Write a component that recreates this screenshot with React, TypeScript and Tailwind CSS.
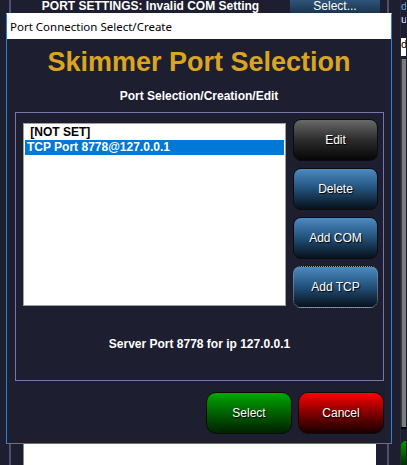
const SideButton = ({ label, kind, focused }: { label: string; kind: "gray" | "blue"; focused?: boolean }) => {
  const tone =
    kind === "gray"
      ? "from-[#6a6a6a] via-[#2c2c2c] to-[#070707]"
      : "from-[#4c8bc3] via-[#22507a] to-[#07121c]";
  return (
    <div
      className={`h-[42px] w-[85px] rounded-[8px] border bg-linear-to-b ${tone} ${
        focused ? "border-dotted border-[#9a9a9a]" : "border-[#0c0c0c]"
      } flex items-center justify-center text-[12px] text-white [text-shadow:1px_1px_1px_#000]`}
    >
      {label}
    </div>
  );
};

const App = () => {
  return (
    <div className="relative w-[407px] h-[465px] overflow-hidden bg-[#1e1e31] font-['Liberation_Sans',Arial,sans-serif]">
      {/* app window behind the dialog */}
      <div className="flex h-full">
        <div className="w-[9px]" />
        <div className="w-[380px] flex flex-col border-l-2 border-r-2 border-[#505075]">
          <div className="flex h-[13px]">
            <div className="flex-1 text-center text-white font-bold text-[12px] leading-[13px]">
              PORT SETTINGS: Invalid COM Setting
            </div>
            <div className="w-[90px] bg-linear-to-b from-[#2d5478] to-[#1b3550] text-center text-white text-[12px] leading-[13px]">
              Select...
            </div>
            <div className="w-[7px]" />
          </div>
          <div className="flex-1" />
          <div className="h-[21px] ml-[12px] mr-[11px] bg-white border-l border-[#8a8a8a]" />
        </div>
        <div className="w-[12px] border-r border-[#2a2a3a]" />
        <div className="w-[5px] flex flex-col overflow-hidden text-[11px] leading-[13px]">
          <div className="h-[13px] text-[#5aaee8]">d</div>
          <div className="h-[12px] text-[#e8e8e8]">u</div>
          <div className="h-[13px]" />
          <div className="h-[18px] bg-white text-black">d</div>
          <div className="h-[3px]" />
          <div className="h-[368px] bg-[#7c7c7c] border-l border-[#3c3c3c]" />
          <div className="h-[2px] bg-black" />
          <div className="h-[12px]" />
          <div className="flex-1 rounded-tl-[6px] bg-linear-to-b from-[#00a000] to-[#003000]" />
        </div>
      </div>

      {/* dialog */}
      <div className="absolute left-[6px] top-[13px] w-[386px] h-[431px] border border-[#2b82d2] border-t-white bg-[#1e1e31] flex flex-col">
        <div className="h-[25px] bg-white flex items-center pl-[3px] font-['Noto_Sans',sans-serif] text-[11.5px] text-black">
          Port Connection Select/Create
        </div>
        <div className="mt-[8px] text-center font-bold text-[27px] leading-[31px] text-[#daa520]">
          Skimmer Port Selection
        </div>
        <div className="mt-[11px] text-center font-bold text-[12px] leading-[14px] text-white">
          Port Selection/Creation/Edit
        </div>
        <div className="mt-[9px] ml-[8px] w-[369px] h-[269px] border border-[#7a74aa] flex flex-col">
          <div className="flex items-start pl-[7px] gap-[7px]">
            <div className="mt-[10px] w-[263px] h-[183px] bg-white border border-[#a0a0a0] p-px">
              <div className="h-[15px] px-[2px] font-bold text-[12px] leading-[15px] text-black whitespace-pre">
                {" [NOT SET]"}
              </div>
              <div className="h-[15px] px-[2px] bg-[#0078d7] font-bold text-[12px] leading-[15px] text-white">
                TCP Port 8778@127.0.0.1
              </div>
            </div>
            <div className="mt-[6px] flex flex-col gap-[7px]">
              <SideButton label="Edit" kind="gray" />
              <SideButton label="Delete" kind="blue" />
              <SideButton label="Add COM" kind="blue" />
              <SideButton label="Add TCP" kind="blue" focused />
            </div>
          </div>
          <div className="mt-[29px] text-center font-bold text-[12px] leading-[14px] text-white">
            Server Port 8778 for ip 127.0.0.1
          </div>
        </div>
        <div className="mt-[11px] mr-[7px] flex justify-end gap-[6px]">
          <div className="h-[42px] w-[86px] rounded-[10px] border border-[#0c0c0c] bg-linear-to-b from-[#00a800] to-[#002200] flex items-center justify-center text-[12px] text-white [text-shadow:1px_1px_1px_#000]">
            Select
          </div>
          <div className="h-[42px] w-[86px] rounded-[10px] border border-[#0c0c0c] bg-linear-to-b from-[#ff0000] to-[#1a0000] flex items-center justify-center text-[12px] text-white [text-shadow:1px_1px_1px_#000]">
            Cancel
          </div>
        </div>
      </div>
    </div>
  );
};

export default App;
